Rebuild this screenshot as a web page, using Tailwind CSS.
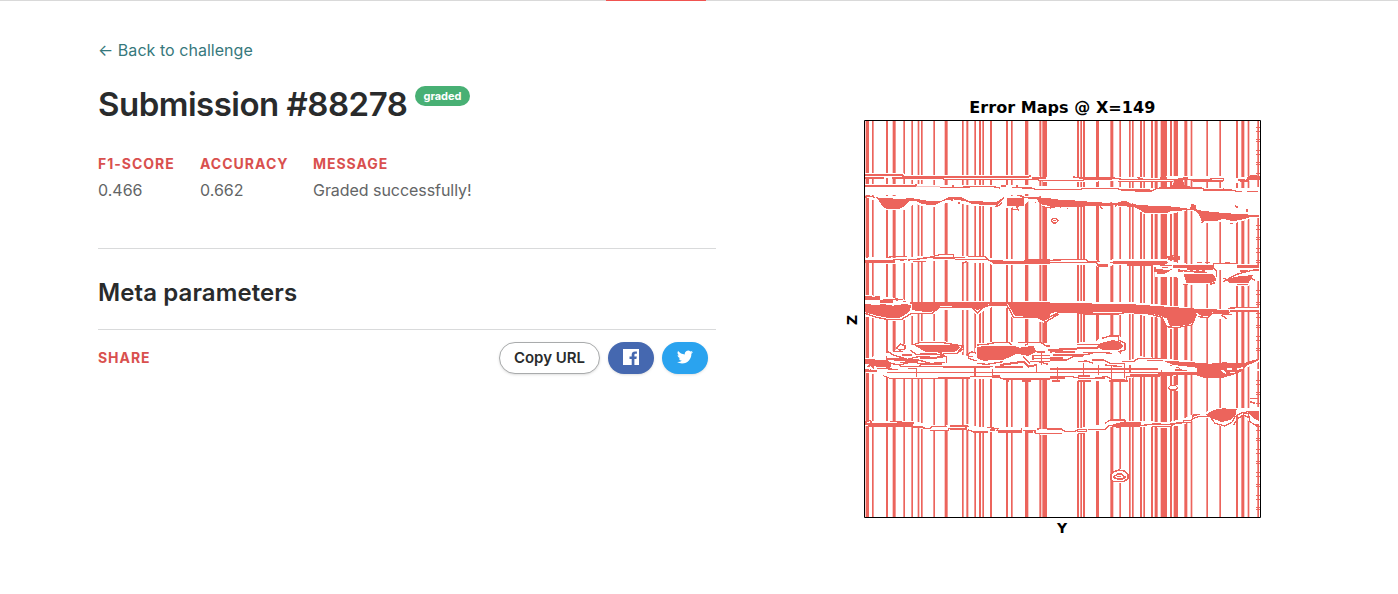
<!DOCTYPE html>
<html lang="en">
<head>
<meta charset="utf-8">
<title>Submission #88278</title>
<script src="https://cdn.jsdelivr.net/npm/@tailwindcss/browser@4"></script>
</head>
<body class="bg-white font-['Inter',sans-serif] text-[#292b2c] overflow-hidden">
<div class="flex h-px bg-[#d9d9d9]"><div class="ml-[606px] w-[100px] bg-[#f05350]"></div></div>
<div class="flex pl-[98px]">
  <main class="w-[618px] shrink-0 pt-[37px]">
    <a href="#" class="flex h-6 items-center text-base tracking-[0.04px] text-[#36787c]"><span class="whitespace-pre">← Back to challenge</span></a>
    <div class="mt-[21px] flex h-[42px] items-start">
      <h1 class="w-[309px] text-[33px] leading-[42px] font-semibold tracking-[-0.5px] whitespace-nowrap">Submission #88278</h1>
      <span class="ml-2 mt-[3px] flex h-5 w-[55px] items-center justify-center rounded-full bg-[#48b074] text-[11px] font-bold text-white">graded</span>
    </div>
    <dl class="mt-[29px] flex h-[94px] text-base leading-6 text-[#636566]">
      <div class="w-[102px]"><dt class="h-6 text-sm leading-[19px] font-bold tracking-[1px] text-[#d9504e]">F1-SCORE</dt><dd>0.466</dd></div>
      <div class="w-[113px]"><dt class="h-6 text-sm leading-[19px] font-bold tracking-[1px] text-[#d9504e]">ACCURACY</dt><dd>0.662</dd></div>
      <div><dt class="h-6 text-sm leading-[19px] font-bold tracking-[0.95px] text-[#d9504e]">MESSAGE</dt><dd class="tracking-[-0.05px]">Graded successfully!</dd></div>
    </dl>
    <h2 class="flex h-[82px] items-center border-y border-[#d9dadb] pt-[7px] text-2xl font-semibold tracking-[0.1px]">Meta parameters</h2>
    <div class="flex h-14 items-center gap-2 pr-2">
      <span class="mr-auto text-sm font-bold tracking-[0.95px] text-[#d9504e]">SHARE</span>
      <button class="h-8 w-[101px] rounded-full border border-[#a9abac] bg-white text-[15px] font-semibold whitespace-nowrap shadow-sm">Copy URL</button>
      <button class="flex h-8 w-[46px] items-center justify-center rounded-full bg-[#4568b0] shadow-sm" aria-label="Facebook"><svg class="-mt-0.5" width="16" height="16" viewBox="0 0 16 16"><path fill="#fff" fill-rule="evenodd" d="M0 0h16v16h-4.6V9.9h2l.4-2.4h-2.4V6c0-.8.4-1.2 1.3-1.2h1.2V2.6C13.400 2.500 12.800 2.400 12 2.400c-2.100 0-3.300 1.200-3.300 3.300v1.800H6.500v2.400h2.200V16H0z"/></svg></button>
      <button class="flex h-8 w-[46px] items-center justify-center rounded-full bg-[#2aa3ef] shadow-sm" aria-label="Twitter"><svg class="-mt-0.5" width="16" height="16" viewBox="0 0 24 24"><path fill="#fff" d="M23.950 4.570a10 10 0 01-2.820.770 4.960 4.960 0 002.160-2.720c-.950.550-2 .960-3.130 1.180a4.920 4.920 0 00-8.380 4.480C7.690 8.100 4.070 6.130 1.640 3.160a4.920 4.920 0 001.520 6.570 4.900 4.900 0 01-2.230-.610v.060c0 2.380 1.700 4.370 3.950 4.830a5 5 0 01-2.210.080 4.940 4.940 0 004.600 3.420A9.870 9.870 0 010 19.540a14 14 0 007.550 2.210c9.050 0 14-7.500 14-13.980 0-.210 0-.420-.020-.630a9.900 9.900 0 002.460-2.550z"/></svg></button>
    </div>
  </main>
  <figure class="ml-[124px] mt-[89px]">
    <svg width="430" height="450" viewBox="0 0 1290 1350" role="img" aria-label="Error map">
      <defs><clipPath id="plot"><path d="M75 93H1261V1281H75z"/></clipPath></defs>
      <g clip-path="url(#plot)" fill="none" stroke-linejoin="bevel">
        <!-- Vertical traces -->
        <g id="traces" fill="#ec645c"></g>
        <g shape-rendering="crispEdges">
        <path d="M1254 110V252M1254 405V570M1254 600V790M1254 870V1280" stroke="#ec645c" stroke-width="15" stroke-dasharray="3 9 3 21 3 3 3 24"/>

        <!-- Upper horizons, left half -->
        <path stroke="#fff" stroke-width="14" d="M75 256H187L200 262H565L620 269H660"/>
        <path stroke="#fff" stroke-width="13" d="M75 288H228L300 292H560L660 298"/>
        <path fill="#fff" d="M75 290H230L330 297H520L660 301V325L620 322 550 311 490 318 460 331 400 333 365 320 310 322 270 325 230 319 110 314 75 316z"/>
        <path fill="#fff" d="M75 320L100 330 130 361H190L225 341 255 351H290L335 333 390 347 450 350 475 353 510 353 550 350 570 330 590 329 610 352 660 360V320L500 319 75 318z"/>
        <g stroke="#ec645c" stroke-width="5">
          <path d="M75 255H187l4 4M75 264H132M155 264H310v4H595l3 4H660M187 261H310" stroke-width="4"/>
          <path d="M310 261H540M540 261H565l8-5M576 263H618" stroke-width="5"/>
          <path d="M75 288H228v-5M300 293H340M335 288h6M340 293L400 290H460L480 294M483 288h15M527 288h6M515 293L575 294 590 299H660" stroke-width="4"/>
          <path d="M228 290H300" stroke-width="3" opacity=".4"/>
          <path d="M75 322L88 318 105 322" stroke-width="4"/>
          <path d="M465 350l15-5 5-8M515 357l18 2M530 350l5 12M605 350l28 4M586 335v5M357 337v5M332 330h7" stroke-width="4"/>
        </g>
        <path fill="#ec645c" d="M108 322L180 327 213 324 260 332 302 334 325 322 363 321 386 333 470 336 493 320V326L472 345 400 343 378 334 340 328 315 331 285 345 250 343 228 333 207 333 192 350 177 357H140L127 349 117 332zM500 324H552V347L535 350 500 348zM527 315L542 314 555 321 618 323 662 330V353L625 347 602 343 590 328 550 324z"/>

        <!-- Upper horizons, right half -->
        <g transform="translate(630 0)">
          <path stroke="#fff" stroke-width="14" d="M0 268H100L195 267 320 270 370 264 510 265 560 271 600 265"/>
          <path fill="#fff" d="M0 291L210 292 320 295 560 294 631 292V374L600 368 540 365 435 354 400 355 280 347 220 334 200 338 75 334 0 325z"/>
          <path fill="#fff" d="M0 347L200 352 225 342 250 350 280 371H365L410 361 435 364 455 398H480L520 395 545 402 590 389 631 383V350H0z"/>
          <g stroke="#ec645c" stroke-width="4">
            <path d="M0 272H100V267H185M70 261l20 3H190L215 268H325L360 268 410 267 430 270H485M205 275H370M430 275L475 273H520V265H480M260 263l20 3M400 263h15M0 298H95V295H200L215 300H300M255 303H305L320 295H460V300H545L560 304H575M520 293V300M590 304H625"/>
            <path d="M105 266H185M330 264H350M565 270L590 273 600 260 628 262" stroke-width="8"/>
            <path d="M50 355h5M150 350l8 6M195 348l5-2M455 398l4-5M500 390l10-5M540 400h10M555 348l10 5M590 357v8" stroke-width="5"/>
          </g>
          <path fill="#ec645c" d="M0 330H55L130 336 200 340 215 333 235 335 240 342 300 347 375 350 420 357 425 342 436 344 440 360 490 366 560 372 628 375V381L605 380 580 388 550 394 520 386 500 393 455 393 445 370 430 359 360 364 350 369H285L270 360 255 352 200 346 90 350 0 353zM320 293L365 290 376 268H398L404 288 462 293V298H320zM605 254L630 258V270H600L590 262z"/>
        </g>
        <path d="M633 392l7-6h8l7 6-7 7h-8z" stroke="#ec645c" stroke-width="4"/><path d="M640 392h8" stroke="#ec645c" stroke-width="4"/>

        <!-- Middle horizons, left half -->
        <g transform="translate(0 435)">
          <path stroke="#fff" stroke-width="18" d="M75 76L170 77 245 72 310 65 380 73 440 77 470 82H660"/>
          <path fill="#fff" d="M75 180L125 183 180 190 210 200 300 200 440 199 470 202 510 200 660 197V255L610 263 580 255 515 248 505 220 490 215 445 218 412 241 390 226 300 226 280 238H225L190 256 150 257 75 245z"/>
          <path fill="#fff" d="M140 355L170 345 175 325 215 330 250 317H310L370 340 365 360 400 365 410 325 480 320 540 322 660 325V430L560 433H170L110 420 75 412V370z"/>
          <g stroke="#ec645c" stroke-width="4">
            <path d="M77 67h8M145 68L155 64H200M160 74H190M205 75L255 70 300 59H340V65M250 67H375M345 73H400M385 65H435L450 78H488M395 73H440M370 85l10-5M180 77L200 73M220 80H258M455 83H555V75H660"/>
            <path d="M75 79H165M280 69H345M460 83H660" stroke-width="8"/>
            <path d="M75 190H120M120 200H160M165 191l10 5M193 197v5M210 204H660" stroke-width="8"/>
            <path d="M75 184h20v4l25-4M130 193H190M75 235L110 247 140 253H185L215 235H275L300 217H395L412 235 425 220 450 210H500L515 235 520 247H590L618 260 640 247 660 235"/>
            <path d="M215 330L240 323H310L370 333V342L350 355 310 355M170 340l10-13 15 5v10l-15 3zM145 350L160 360 200 372M140 370L165 375 235 375 270 385 315 383M240 357H290L320 365M150 385L180 390 215 380M410 330L440 328 470 322H505L515 330M535 322H600L620 333H655V345M380 360L395 350 408 355M385 365H400M550 365L570 385M555 332l10-7"/>
            <path d="M160 350h30M140 362v12M210 345l20 14h30M205 372l30-7h35M235 395l12-8h58M320 365v18M180 382h50M385 355v15l25 8M410 385l30 3 50-8M515 385l25-5M595 380l30 8"/>
            <path d="M140 372h55M195 380h40M240 368H290M580 362v14M590 350H615M625 345H660M465 395H550M480 390L550 380 565 395 590 390" stroke-width="6"/>
            <path d="M110 400L150 402 175 403M180 395H315M315 395H460M130 422L150 430H300M300 431H390M390 424H465L490 432H660M140 412H660M230 400V425M405 395V425M457 403V420M590 390v25M645 395v30" stroke-width="3.500"/>
            <path d="M75 378H140L150 385V395L115 392 75 382M310 395H450M295 428H390M455 424H480M490 432H530M595 432H625M640 428h16" stroke-width="7"/>
            <path d="M575 360H660M580 371H660M570 380H660M605 350V390M640 350V390" stroke-width="3"/>
            <path d="M300 355l10 5M290 365h20M355 350l12-15M185 360h30M205 400h25M230 385h15M82 395l12-5 8 10M90 405l20 5" stroke-width="5"/>
          </g>
          <path fill="#ec645c" d="M75 207L110 210 130 207 160 212 200 206 213 212 210 228 190 243 180 248H140L110 242 75 232zM217 205L390 204 450 204 440 214 412 226 395 217 300 213 285 228 260 232 217 225zM500 202H662V235L635 246 615 256 590 247 525 243zM222 330H350L362 338 345 350 300 353 255 350zM412 336L440 332H520L540 338 580 332 590 350 565 363 530 356 490 375 430 377 412 370zM75 372L135 375 150 385 145 397 110 395 75 380zM75 402L110 406V412H75z"/>
        </g>

        <!-- Middle horizons, right half -->
        <g transform="translate(630 435)">
          <path stroke="#fff" stroke-width="18" d="M0 80H110L150 87 190 82H350L375 94 631 98"/>
          <path fill="#fff" d="M310 80H375L430 100H500L505 145 400 150 380 125 315 125zM520 120L560 96H631V135L590 155 520 150z"/>
          <path fill="#fff" d="M0 197L280 203 350 211 440 220 530 221 560 216H631V228L545 230V250L510 253 480 242 455 253 435 243 425 270 355 283 340 250 250 238 120 240 90 235 20 236 0 250z"/>
          <path fill="#fff" d="M0 330L140 318 160 300 205 299 235 335 205 353 240 375 270 364 360 373 440 378 440 418 350 423 240 428 230 438H0z"/>
          <g stroke="#ec645c" stroke-width="4">
            <path d="M0 76L65 73 110 74 115 80H150M0 83H140L145 95H175M180 82H355M230 90H300L320 83M345 67L370 62 390 65M355 72H390M310 88L365 92M315 95V110M335 97h20M440 82h15M465 82h15M525 82h15M375 96H490V85H560M385 105L420 110 470 112M500 125V110L490 97M520 140L560 118 610 105 628 105M570 108h25"/>
            <path d="M190 82H350M145 92H175M355 69H390M370 94H490M560 95H628" stroke-width="8"/>
            <path d="M385 110h15M412 102h78M420 108h8M438 108h8M456 108h8M400 148h15M480 148l15-5M520 130l15 5M600 125l15 12M560 148h35"/>
            <path d="M0 245L25 233H85L100 237H205L230 232 300 237 335 247 350 275 375 279 425 270 440 238M445 245L475 248 485 235 545 238M535 220L560 218H628M540 228H628M515 240L530 252"/>
            <path d="M155 310L180 303H205V315L225 325V345L205 350M80 328H150M100 352H150L185 355M0 352L30 342H80M10 360H100L130 355M0 375H50L75 363H100M85 380L110 378 130 385M125 375L160 375 180 385H225M165 390L215 395M215 380H250L265 370H335M290 377H340"/>
            <path d="M0 345H40M80 338H145M15 350H75M0 370h40" stroke-width="7"/>
            <path d="M0 402H325M0 412H440M22 395V435M100 385V425M145 390V420M185 390V435M223 385V430M240 390V415M0 424H60L90 430H130L170 424 190 436H230V425H330M335 413V405M375 405H410M360 390L390 400" stroke-width="3.500"/>
            <path d="M0 428H45M85 424H120M135 430H165M185 435H225M240 420H330" stroke-width="6"/>
          </g>
          <path fill="#ec645c" d="M315 100L350 105 370 102 340 118H322zM400 117L490 118 500 135 480 145H410zM525 133L560 125 610 120 595 145H540zM0 203L250 208 350 215 440 221 535 225 540 235 515 238 485 232 475 243H455L440 233 430 262 415 270 360 275 350 250 320 239 220 231 100 233 20 230 0 237zM150 325L190 315 210 320 220 335 205 345H160L140 337zM340 378L400 380 480 386 520 382 580 385 628 370V382L590 392 575 408 550 420 515 429H465L435 420 350 422H325V412L440 412V398L370 390z"/>
          <path stroke="#fff" stroke-width="5" d="M515 405l12 10M530 402h15M540 412h15M560 402l20-3M590 395L628 378M600 405H628M365 393h20M395 403h15"/>
        </g>

        <!-- Lower horizon and isolated patches -->
        <g transform="translate(0 870)">
          <path stroke="#fff" stroke-width="17" d="M75 130H210L260 140 300 146 390 141 410 149 450 148 560 150 600 155H660"/>
          <g stroke="#ec645c" stroke-width="4">
            <path d="M75 124l18-2v8H150M150 124H180L190 129H222M85 138H215L255 142H220M250 146H270L275 140H320M270 151H325V145H375L385 138H330M385 150L400 155M440 142L475 146 470 152H545V143M550 152H585V160H660M590 148L600 146M620 147H660"/>
            <path d="M75 130L90 133H155L180 130 218 134M330 146H380M400 155H445M450 149H465M475 154H545M555 155H580" stroke-width="7"/>
            <path d="M500 3h8M545 2h28M637 2h22M715 2h38M807 2h56" stroke-width="6"/>
          </g>
          <g transform="translate(630 0)">
            <path stroke="#fff" stroke-width="17" d="M0 154H80L110 149 150 143 180 131H280L350 136 400 125 435 110 480 103"/>
            <path fill="#fff" d="M455 105L490 83 580 84 631 80V137L605 135 580 105 560 110 545 138H515L490 128 480 113zM352 14h34v18h-34zM183 280l12-12h22l14 10v20l-10 12h-26l-12-8z"/>
            <g stroke="#ec645c" stroke-width="4">
              <path d="M0 147H35L45 155H75L85 148H110V155H80M0 160H35M85 160H100M115 148H165L180 135M165 130L180 120H225V128L270 127M175 137H270L310 132 355 133 400 128V122H425L430 105L450 104M305 140H360L380 128 425 127M430 115L445 110H480L495 130 525 138 545 128 555 110 575 98 595 100 600 125 615 135H628M550 135L565 115 580 105 600 115M600 55h28M600 65l15 5"/>
              <path d="M355 23l6-6h16l6 6-6 7h-16z"/>
              <path d="M183 300V285l8-10 15-5 18 3 10 12v12l-15 8H190zM190 292l12-10h12l12 10-10 5h-12zM200 290h12" stroke-width="4.500"/>
            </g>
            <path fill="#ec645c" d="M175 137L215 126H275L270 140 200 143zM467 105L490 90 520 85 560 88 558 102 540 120 515 126 485 115zM568 92H628V125L605 110 590 95z"/>
          </g>
        </g>
        </g>
      </g>
      <path d="M73.500 91.500H1261.500V1282.500H73.500z" fill="none" stroke="#000" stroke-width="3"/>
      <g fill="#000" font-family="'DejaVu Sans',sans-serif" font-weight="bold" text-anchor="middle">
        <text x="667" y="68" font-size="48" textLength="558">Error Maps @ X=149</text>
        <text x="666" y="1329" font-size="42">Y</text>
        <text transform="translate(51 690) rotate(-90)" font-size="42">Z</text>
      </g>
    </svg>
  </figure>
</div>
<script>
  // Trace position and width, in plot units.
  const traces = [[77,10],[96,5],[138,6],[158,9],[190,5],[214,5],[233,5],[243,5],[280,5],[314,9],[366,5],[379,6],[403,5],[417,6],[427,5],[450,6],[498,6],[513,5],[555,10],[598,6],[607,14],[711,6],[721,5],[729,6],[768,9],[811,9],[838,5],[867,5],[876,5],[900,6],[910,5],[933,6],[944,9],[962,19],[990,6],[1001,13],[1033,9],[1052,5],[1099,5],[1138,5],[1188,6],[1204,9],[1223,5],[1252,5]];
  document.getElementById('traces').innerHTML = traces.map(([x, w]) =>
    `<path d="M${x} 93h${w}v1188h${-w}z"/>`).join('');
</script>
</body>
</html>
